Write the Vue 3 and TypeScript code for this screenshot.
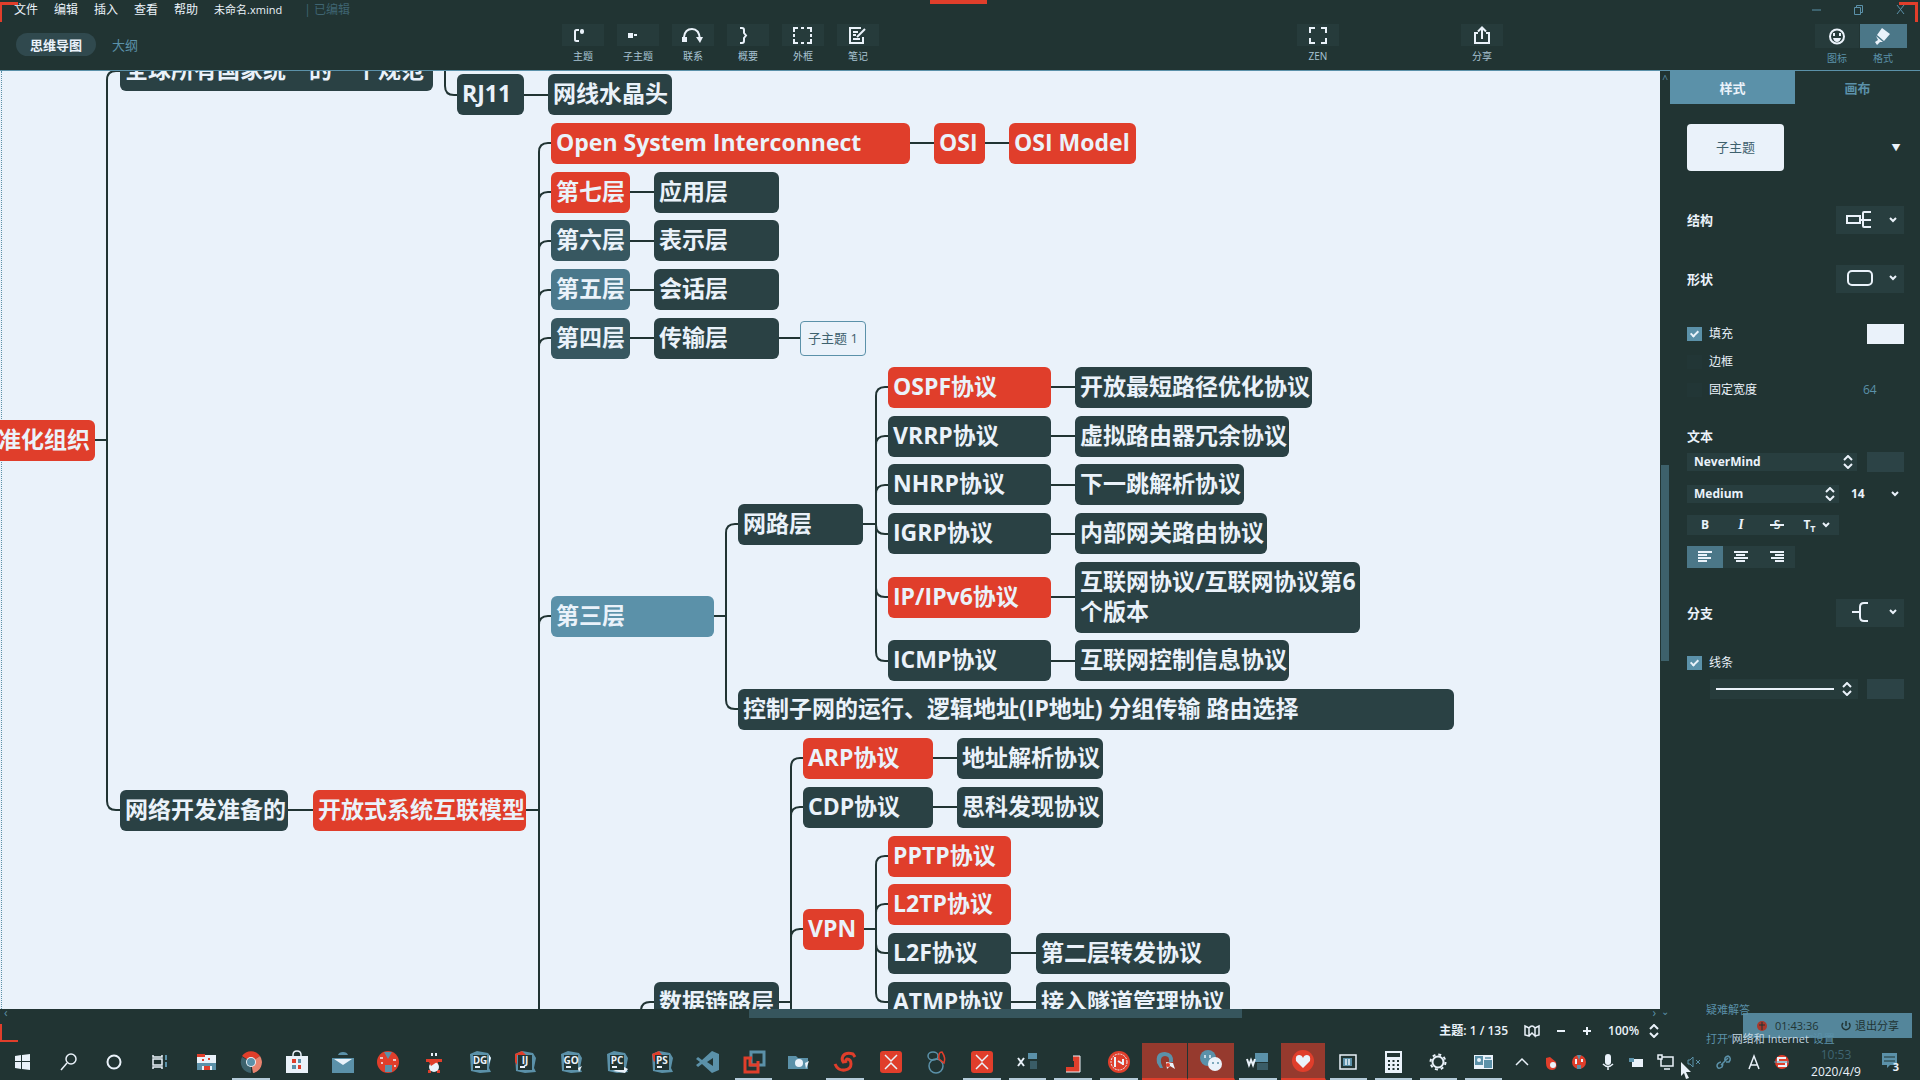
<script setup lang="ts">
import { ref } from 'vue'

type Tone = 'dark' | 'red' | 'slate' | 'steel' | 'blue' | 'plain'

interface Topic {
  text: string
  x: number
  y: number
  w: number
  h?: number
  tone?: Tone
}

interface Icon {
  name: string
  svg: string
}

interface TaskItem extends Icon {
  state?: 'open' | 'alert'
}

const menus = ['文件', '编辑', '插入', '查看', '帮助']

const tools: Icon[] = [
  { name: '主题', svg: '<path d="M7 5H4.500Q3 5 3 6.500V14.500Q3 16 4.500 16H7" fill="none" stroke="currentColor" stroke-width="2"/><rect x="8" y="4" width="4" height="5" rx="2" fill="currentColor"/>' },
  { name: '子主题', svg: '<rect x="1" y="8" width="5" height="5" fill="currentColor"/><rect x="7" y="9" width="3" height="2" fill="currentColor"/>' },
  { name: '联系', svg: '<rect x="0" y="12" width="5" height="5" fill="currentColor"/><path d="M2 12Q3 4 10 4Q17 4 18 14" fill="none" stroke="currentColor" stroke-width="2"/><path d="M14 12H21L18 18Z" fill="currentColor"/>' },
  { name: '概要', svg: '<path d="M3 3H5Q7 3 7 5V8L9 10.500L7 13V16Q7 18 5 18H3" fill="none" stroke="currentColor" stroke-width="2"/>' },
  { name: '外框', svg: '<path d="M2 7V3H6M9 3H12M15 3H19V7M19 9V12M19 14V18H15M12 18H9M6 18H2V14M2 12V9" fill="none" stroke="currentColor" stroke-width="2"/>' },
  { name: '笔记', svg: '<path d="M14 3H3V18H16V12" fill="none" stroke="currentColor" stroke-width="2"/><path d="M6 7H11M6 10H9M6 14H13M10 12L18 4" fill="none" stroke="currentColor" stroke-width="2"/>' }
]
const zen: Icon = { name: 'ZEN', svg: '<path d="M2 8V3H7M13 3H18V8M18 13V18H13M7 18H2V13" fill="none" stroke="currentColor" stroke-width="2"/>' }
const share: Icon = { name: '分享', svg: '<path d="M6 8H3V18H17V8H14M10 14V3M6 6.500L10 2.500L14 6.500" fill="none" stroke="currentColor" stroke-width="2"/>' }
const side: Icon[] = [
  { name: '图标', svg: '<circle cx="10" cy="10.500" r="7" fill="none" stroke="currentColor" stroke-width="2"/><path d="M6 7h2v3h-2zM12 7h2v3h-2zM6 12H14Q13 16 10 16Q7 16 6 12Z" fill="currentColor"/>' },
  { name: '格式', svg: '<path d="M9 2L17 8L11 15L4 9ZM3 10L10 16L7 16L4 19L2 16L5 14Z" fill="currentColor"/>' }
]

const topics: Topic[] = [
  { text: '全球所有国家统一的一个规范', x: 120, y: 50, w: 313 },
  { text: 'RJ11', x: 457, y: 74, w: 67 },
  { text: '网线水晶头', x: 548, y: 74, w: 124 },
  { text: 'Open System Interconnect', x: 551, y: 123, w: 359, tone: 'red' },
  { text: 'OSI', x: 934, y: 123, w: 51, tone: 'red' },
  { text: 'OSI Model', x: 1009, y: 123, w: 127, tone: 'red' },
  { text: '第七层', x: 551, y: 172, w: 79, tone: 'red' },
  { text: '应用层', x: 654, y: 172, w: 125 },
  { text: '第六层', x: 551, y: 220, w: 79, tone: 'slate' },
  { text: '表示层', x: 654, y: 220, w: 125 },
  { text: '第五层', x: 551, y: 269, w: 79, tone: 'steel' },
  { text: '会话层', x: 654, y: 269, w: 125 },
  { text: '第四层', x: 551, y: 318, w: 79, tone: 'slate' },
  { text: '传输层', x: 654, y: 318, w: 125 },
  { text: '子主题 1', x: 800, y: 321, w: 66, h: 35, tone: 'plain' },
  { text: 'OSPF协议', x: 888, y: 367, w: 163, tone: 'red' },
  { text: '开放最短路径优化协议', x: 1075, y: 367, w: 237 },
  { text: 'VRRP协议', x: 888, y: 416, w: 163 },
  { text: '虚拟路由器冗余协议', x: 1075, y: 416, w: 214 },
  { text: 'NHRP协议', x: 888, y: 464, w: 163 },
  { text: '下一跳解析协议', x: 1075, y: 464, w: 169 },
  { text: 'IGRP协议', x: 888, y: 513, w: 163 },
  { text: '内部网关路由协议', x: 1075, y: 513, w: 192 },
  { text: 'IP/IPv6协议', x: 888, y: 577, w: 163, tone: 'red' },
  { text: '互联网协议/互联网协议第6\n个版本', x: 1075, y: 562, w: 285, h: 71 },
  { text: 'ICMP协议', x: 888, y: 640, w: 163 },
  { text: '互联网控制信息协议', x: 1075, y: 640, w: 214 },
  { text: '网路层', x: 738, y: 504, w: 125 },
  { text: '第三层', x: 551, y: 596, w: 163, tone: 'blue' },
  { text: '控制子网的运行、逻辑地址(IP地址) 分组传输 路由选择', x: 738, y: 689, w: 716 },
  { text: 'ARP协议', x: 803, y: 738, w: 130, tone: 'red' },
  { text: '地址解析协议', x: 957, y: 738, w: 146 },
  { text: 'CDP协议', x: 803, y: 787, w: 130 },
  { text: '思科发现协议', x: 957, y: 787, w: 146 },
  { text: 'PPTP协议', x: 888, y: 836, w: 123, tone: 'red' },
  { text: 'L2TP协议', x: 888, y: 884, w: 123, tone: 'red' },
  { text: 'VPN', x: 803, y: 909, w: 61, tone: 'red' },
  { text: 'L2F协议', x: 888, y: 933, w: 123 },
  { text: '第二层转发协议', x: 1036, y: 933, w: 194 },
  { text: 'ATMP协议', x: 888, y: 982, w: 123 },
  { text: '接入隧道管理协议', x: 1036, y: 982, w: 194 },
  { text: '数据链路层', x: 654, y: 982, w: 125 },
  { text: '网络开发准备的', x: 120, y: 790, w: 168 },
  { text: '开放式系统互联模型', x: 313, y: 790, w: 213, tone: 'red' },
  { text: '国际标准化组织', x: -76, y: 420, w: 171, tone: 'red' }
]

// Straight links between neighbouring topics: [x1, x2, y]
const links: number[][] = [
  [524, 548, 95], [910, 934, 143], [985, 1009, 143], [630, 654, 192], [630, 654, 241],
  [630, 654, 290], [630, 654, 338], [779, 800, 338], [1051, 1075, 387], [1051, 1075, 436],
  [1051, 1075, 485], [1051, 1075, 534], [1051, 1075, 597], [1051, 1075, 661], [933, 957, 758],
  [933, 957, 807], [1011, 1036, 953], [1011, 1036, 1002], [288, 313, 810], [526, 539, 810],
  [95, 107, 440], [433, 445, 70], [714, 726, 616], [863, 876, 524], [864, 876, 929], [779, 791, 1002]
]

// Trunks fan out to their children; `up` children sit above the parent, `down` ones below it
const trunks = [
  { x: 107, from: 440, to: 120, up: [71], down: [810] },
  { x: 445, from: 60, to: 457, up: [], down: [95] },
  { x: 539, from: 1020, to: 551, up: [143, 192, 241, 290, 338, 616], down: [] },
  { x: 726, from: 616, to: 738, up: [524], down: [709] },
  { x: 876, from: 524, to: 888, up: [387, 436, 485], down: [534, 597, 661] },
  { x: 791, from: 1020, to: 803, up: [758, 807, 929], down: [] },
  { x: 876, from: 929, to: 888, up: [856, 904], down: [953, 1002] },
  { x: 641, from: 1020, to: 654, up: [1002], down: [] }
]

const linkPath = [
  ...links.map(([a, b, y]) => `M${a} ${y}H${b}`),
  ...trunks.flatMap((t) => [
    ...t.up.map((y) => `M${t.x} ${t.from}V${y + 9}Q${t.x} ${y} ${t.x + 9} ${y}H${t.to}`),
    ...t.down.map((y) => `M${t.x} ${t.from}V${y - 9}Q${t.x} ${y} ${t.x + 9} ${y}H${t.to}`)
  ])
].join('')

const scrollTop = 71
const place = (t: Topic) => ({
  left: `${t.x}px`,
  top: `${t.y - scrollTop}px`,
  width: `${t.w}px`,
  height: `${t.h ?? 41}px`
})

const fill = ref(true)
const border = ref(false)
const fixedWidth = ref(false)
const line = ref(true)

const L = '#eaf2fa'
const B = '#5b91a9'
const R = '#e03e2b'
const D = '#213433'
const jet = (label: string, accent: string) =>
  `<path d="M2 4L9 1L20 3L23 8L21 18L23 22L12 23L3 21Z" fill="${B}"/><path d="${accent}"/><rect x="5" y="5" width="14" height="15" fill="${D}"/><text x="12" y="14" font-size="10" font-weight="700" text-anchor="middle" fill="${L}">${label}</text><path d="M7 17H12" stroke="${L}" stroke-width="2"/>`
const xbox = `<rect x="1" y="1" width="22" height="22" rx="3" fill="${R}"/><path d="M6 5L12 11L18 5M6 19L12 13L18 19" fill="none" stroke="${L}" stroke-width="1.500"/>`

const tasks: TaskItem[] = [
  { name: '开始', svg: `<path d="M4 6L10 5V11H4ZM11 5L19 4V11H11ZM4 12H10V19L4 18ZM11 12H19V20L11 19Z" fill="${L}"/>` },
  { name: '搜索', svg: `<circle cx="14" cy="9" r="5" fill="none" stroke="${L}" stroke-width="1.500"/><path d="M10 13L4 20" stroke="${L}" stroke-width="1.500"/>` },
  { name: '助手', svg: `<circle cx="12" cy="12" r="6.500" fill="none" stroke="${L}" stroke-width="2"/>` },
  { name: '任务视图', svg: `<path d="M5 5V7H14V5M5 19V17H14V19M5 9V15H14V9Z" fill="none" stroke="${L}" stroke-width="1.500"/><path d="M18 5V19" stroke="${B}" stroke-width="2" stroke-dasharray="5 2"/>` },
  { name: '商城', svg: `<rect x="3" y="5" width="19" height="15" fill="${L}"/><path d="M3 4H11V7H3ZM8 9H10V11H8ZM14 8H16V10H14Z" fill="${R}"/><path d="M3 13H22V20H18V16H8V20H3Z" fill="${B}"/><rect x="10" y="16" width="6" height="4" fill="${R}"/>` },
  { name: '浏览器', state: 'open', svg: `<path d="M12 12L3 6A11 11 0 0 1 21 6Z" fill="${R}"/><path d="M12 12L21 6A11 11 0 0 1 14 23Z" fill="#e8836f"/><path d="M12 12L3 7A11 11 0 0 0 12 23Z" fill="#3d626c"/><circle cx="12" cy="12" r="5" fill="${L}"/><circle cx="12" cy="12" r="4" fill="${B}"/>` },
  { name: '应用商店', svg: `<path d="M8 7V5Q8 1 12 1Q16 1 16 5V7" fill="none" stroke="${L}" stroke-width="1.500"/><rect x="1" y="6" width="22" height="17" fill="${L}"/><path d="M7 9H11V13H7ZM13 15H16V19H13Z" fill="${R}"/><path d="M13 9H16V13H13ZM7 15H11V19H7Z" fill="${B}"/>` },
  { name: '邮件', svg: `<path d="M7 5Q8 2 12 2Q16 2 17 5ZM1 8H23V23H1Z" fill="${B}"/><path d="M3 9H21L12 15Z" fill="${L}"/>` },
  { name: '地球', svg: `<circle cx="12" cy="12" r="11" fill="${R}"/><path d="M8 2H16L12 9ZM9 15H16V22H9Z" fill="${B}"/><path d="M4 8H7M17 10H20M5 13H7M18 16H20" stroke="${L}" stroke-width="1.500"/>` },
  { name: '工具', svg: `<path d="M9 3H11V6H9ZM13 3H15V6H13Z" fill="${L}"/><path d="M4 9H20V12H16V14H8V12H4ZM6 20H9V23H6ZM15 20H18V23H15Z" fill="${R}"/><circle cx="12" cy="17" r="5" fill="${L}"/><path d="M7 12H15L9 16Z" fill="${R}"/>` },
  { name: 'DataGrip', svg: jet('DG', `M20 3L23 8L21 14V5Z" fill="${L}`) },
  { name: 'IntelliJ IDEA', svg: jet('IJ', `M2 4L9 1L13 5H4V15L2 12Z" fill="${R}`) },
  { name: 'GoLand', svg: jet('GO', `M19 18L23 16L20 22Z" fill="${L}`) },
  { name: 'PyCharm', svg: jet('PC', `M19 17L23 19L20 23L8 21Z" fill="${L}`) },
  { name: 'PhpStorm', svg: jet('PS', `M2 4L9 1L12 5L4 12Z" fill="${R}`) },
  { name: '代码编辑器', svg: `<path d="M16 1L23 4V20L16 23L6 14L2 17L0 15L4 12L0 9L2 7L6 10ZM17 8L11 12L17 16Z" fill="${B}" fill-rule="evenodd"/>` },
  { name: '虚拟机', state: 'open', svg: `<rect x="9" y="2" width="13" height="13" fill="none" stroke="${B}" stroke-width="3"/><path d="M10 8H3V22H16V16M8 8V15H16V11" fill="none" stroke="${R}" stroke-width="3"/>` },
  { name: '相机', svg: `<path d="M1 6H9L11 8H21V19H1Z" fill="${B}"/><circle cx="12" cy="13" r="4" fill="${L}"/><path d="M18 13L22 11L19 19Z" fill="${L}"/>` },
  { name: '旋风', state: 'open', svg: `<path d="M2 14Q5 21 12 20Q18 19 18 14Q18 9 14 9Q12 10 13 13M11 13Q8 10 10 6Q13 2 20 4L22 7" fill="none" stroke="${R}" stroke-width="3"/>` },
  { name: 'Xshell', svg: xbox },
  { name: '地图', svg: `<ellipse cx="9" cy="6" rx="5" ry="4" fill="none" stroke="${B}" stroke-width="1.500"/><circle cx="12" cy="16" r="7" fill="none" stroke="${B}" stroke-width="1.500"/><path d="M15 9Q14 2 18 2Q22 8 20 13Z" fill="none" stroke="${R}" stroke-width="1.500"/>` },
  { name: 'XMind', state: 'open', svg: xbox },
  { name: '表格', state: 'open', svg: `<rect x="12" y="3" width="9" height="6" fill="${B}"/><path d="M14 11H21V19H14Z" fill="#3a5c66"/><path d="M2 8L8 16M8 8L2 16" stroke="${L}" stroke-width="2"/>` },
  { name: '演示', state: 'open', svg: `<path d="M12 6H19V22H5V17H13V11H12Z" fill="${R}"/><path d="M12 6H19V22H5" fill="none" stroke="${L}" stroke-width="1"/>` },
  { name: '录屏', state: 'open', svg: `<ellipse cx="12" cy="12" rx="11" ry="11" fill="${R}"/><circle cx="12" cy="12" r="8" fill="none" stroke="${L}" stroke-width="1" stroke-dasharray="2 1"/><path d="M8 7V17M11 11L16 14M16 9V15" stroke="${L}" stroke-width="2"/>` },
  { name: '会议', state: 'alert', svg: `<path d="M7 19L4 14Q2 3 12 3Q21 4 20 13H16Q17 7 12 7Q7 7 8 14L10 19Z" fill="${B}"/><path d="M13 13L20 14L22 20L17 17L14 20Z" fill="${L}"/><circle cx="15" cy="16" r="2" fill="${R}"/>` },
  { name: '微信', state: 'alert', svg: `<circle cx="9" cy="9" r="8" fill="${B}"/><circle cx="16" cy="15" r="7" fill="${L}"/><path d="M6 6V9M11 6V9" stroke="${L}" stroke-width="1.500"/><path d="M13 14H15M18 14H20" stroke="${B}" stroke-width="1.500"/>` },
  { name: '文档', state: 'open', svg: `<rect x="9" y="3" width="13" height="9" fill="${B}"/><path d="M11 13H22V20H11Z" fill="#3a5c66"/><path d="M1 9L3 15L5 10L7 15L9 9" fill="none" stroke="${L}" stroke-width="2"/>` },
  { name: '健康', state: 'alert', svg: `<ellipse cx="12" cy="12" rx="11" ry="11" fill="${R}"/><path d="M12 19L5 12Q4 6 8 6Q11 6 12 9Q13 6 16 6Q20 6 19 12Z" fill="${L}"/>` },
  { name: '取景', state: 'open', svg: `<rect x="4" y="5" width="16" height="14" fill="none" stroke="${L}" stroke-width="1.500"/><rect x="7" y="8" width="9" height="8" fill="${B}"/><path d="M10 9V15M13 9V15" stroke="${L}" stroke-width="1.500"/>` },
  { name: '计算器', state: 'open', svg: `<rect x="4" y="1" width="17" height="22" fill="${L}"/><rect x="6" y="3" width="13" height="4" fill="${D}"/><path d="M8 10V20M12.500 10V20M17 10V20" stroke="${D}" stroke-width="2" stroke-dasharray="2 2"/>` },
  { name: '设置', state: 'open', svg: `<circle cx="12" cy="12" r="5.500" fill="none" stroke="${L}" stroke-width="2"/><circle cx="12" cy="12" r="7.500" fill="none" stroke="${L}" stroke-width="2" stroke-dasharray="3 2.900"/>` },
  { name: '名片', state: 'open', svg: `<rect x="3" y="5" width="19" height="14" fill="${L}"/><path d="M4 6H12V15H4ZM13 10H21V18H13Z" fill="${B}"/><circle cx="8" cy="10" r="2" fill="${L}"/><path d="M14 8H20" stroke="${B}" stroke-width="1.500"/>` }
]

const tray: Icon[] = [
  { name: '显示隐藏的图标', svg: `<path d="M7 15L13 9L19 15" fill="none" stroke="${L}" stroke-width="1.500"/>` },
  { name: '安全', svg: `<path d="M8 8L12 7L18 12Q20 20 14 20Q8 20 8 13Z" fill="${R}"/><circle cx="15" cy="15" r="3" fill="${L}"/>` },
  { name: '网络球', svg: `<circle cx="12" cy="12" r="7" fill="${R}"/><path d="M10 5H14L12 10ZM10 15H14V19H10Z" fill="${B}"/><path d="M9 9V14M15 9V12" stroke="${L}" stroke-width="2"/>` },
  { name: '麦克风', svg: `<rect x="9" y="4" width="6" height="11" rx="3" fill="${L}"/><path d="M7 14Q12 19 17 14M12 17V20" fill="none" stroke="${L}" stroke-width="1.500"/>` },
  { name: '电源', svg: `<rect x="7" y="9" width="11" height="8" fill="${L}"/><path d="M4 8H9V12H4Z" fill="${B}"/>` },
  { name: '网络', svg: `<rect x="7" y="7" width="12" height="9" fill="none" stroke="${L}" stroke-width="1.500"/><path d="M4 5H8V9H4ZM10 19H16" stroke="${L}" fill="${D}" stroke-width="1.500"/>` },
  { name: '音量', svg: `<path d="M5 10H7L10 7V17L7 14H5Z" fill="none" stroke="${B}"/><path d="M13 10L17 14M17 10L13 14" stroke="${B}"/>` },
  { name: '链接', svg: `<path d="M9 12Q5 13 5 16Q6 20 10 17L11 14M13 11Q12 7 16 6Q20 8 17 12L14 12M9 15L16 8" fill="none" stroke="${B}" stroke-width="1.500"/>` },
  { name: '输入法', svg: `<path d="M8 19L13 6L18 19M10 15H16" fill="none" stroke="${L}" stroke-width="1.500"/>` },
  { name: '拼音', svg: `<circle cx="12" cy="12" r="7" fill="${R}"/><path d="M16 8H8V12H16V16H8" fill="none" stroke="${L}" stroke-width="2"/><path d="M4 12H19" stroke="${B}" stroke-width="1"/>` }
]
</script>

<template>
  <div class="app">
    <header class="head">
      <nav class="menu">
        <button v-for="m in menus" :key="m">{{ m }}</button>
        <span class="file">未命名.xmind</span>
        <span class="edited">| 已编辑</span>
        <div class="win">
          <button aria-label="最小化"><svg width="12" height="12"><path d="M1 6H10" stroke="currentColor" /></svg></button>
          <button aria-label="还原"><svg width="12" height="12" fill="none" stroke="currentColor"><path d="M1.500 3.500H7.500V10.500H1.500ZM3.500 3V1.500H9.500V8.500H8" /></svg></button>
          <button aria-label="关闭"><svg width="12" height="12"><path d="M2 1L9 10M9 1L2 10" stroke="currentColor" /></svg></button>
        </div>
      </nav>
      <div class="bar">
        <div class="views">
          <button class="view on">思维导图</button>
          <button class="view">大纲</button>
        </div>
        <div class="tools">
          <button v-for="t in tools" :key="t.name" class="tool">
            <span class="pad"><svg width="21" height="21" viewBox="0 0 21 21" v-html="t.svg"></svg></span>{{ t.name }}
          </button>
        </div>
        <button class="tool zen">
          <span class="pad"><svg width="20" height="21" viewBox="0 0 20 21" v-html="zen.svg"></svg></span>{{ zen.name }}
        </button>
        <button class="tool share">
          <span class="pad"><svg width="20" height="21" viewBox="0 0 20 21" v-html="share.svg"></svg></span>{{ share.name }}
        </button>
        <div class="side">
          <button v-for="(t, i) in side" :key="t.name" class="tool dim" :class="{ active: i === 1 }">
            <span class="pad"><svg width="20" height="20" viewBox="0 0 20 20" v-html="t.svg"></svg></span>{{ t.name }}
          </button>
        </div>
      </div>
      <i class="mark tl"></i><i class="mark tr"></i><i class="notch"></i>
    </header>

    <div class="body">
      <div class="stage">
        <main class="canvas">
          <svg class="lines" width="1660" height="940" :viewBox="`0 ${scrollTop} 1660 940`">
            <path :d="linkPath" fill="none" stroke="#213433" stroke-width="2" />
          </svg>
          <div
            v-for="t in topics"
            :key="t.text"
            class="topic"
            :class="t.tone ?? 'dark'"
            :style="place(t)"
          >{{ t.text }}</div>
        </main>
        <div class="hscroll"><span>‹</span><i></i><span>›</span></div>
      </div>
      <div class="vscroll"><span>^</span><i></i><span>⌄</span></div>

      <aside class="panel">
        <div class="tabs">
          <button class="tab on">样式</button>
          <button class="tab">画布</button>
        </div>
        <div class="preview">
          <div class="card">子主题</div>
          <button class="drop" aria-label="更多样式">▼</button>
        </div>
        <div class="row struct">
          <strong>结构</strong>
          <button class="pick" aria-label="结构">
            <svg width="68" height="28" fill="none" stroke="#eaf2fa" stroke-width="2"><path d="M11 10H24V17H11ZM24 14H35M35 6H28Q27 6 27 7V20Q27 21 28 21H35" /><path d="M54 12L57 15L60 12" /></svg>
          </button>
        </div>
        <div class="row shape">
          <strong>形状</strong>
          <button class="pick" aria-label="形状">
            <svg width="68" height="28" fill="none" stroke="#eaf2fa" stroke-width="2"><rect x="12" y="6" width="24" height="14" rx="4" /><path d="M54 11L57 14L60 11" /></svg>
          </button>
        </div>
        <div class="checks">
          <div class="check"><label><input v-model="fill" type="checkbox" />填充</label><button class="swatch" aria-label="填充颜色"></button></div>
          <div class="check"><label><input v-model="border" type="checkbox" />边框</label></div>
          <div class="check"><label><input v-model="fixedWidth" type="checkbox" />固定宽度</label><span class="num">64</span></div>
        </div>
        <strong class="title">文本</strong>
        <div class="line family">
          <span class="sel">
            <select aria-label="字体"><option>NeverMind</option></select>
            <svg width="10" height="14"><path d="M1 5L5 1L9 5M1 9L5 13L9 9" /></svg>
          </span>
          <button class="blank" aria-label="文字颜色"></button>
        </div>
        <div class="line weight">
          <span class="sel short">
            <select aria-label="字重"><option>Medium</option></select>
            <svg width="10" height="14"><path d="M1 5L5 1L9 5M1 9L5 13L9 9" /></svg>
          </span>
          <span class="sel size">
            <select aria-label="字号"><option>14</option></select>
            <svg width="10" height="8"><path d="M2 2L5 5L8 2" /></svg>
          </span>
        </div>
        <div class="group text">
          <button><b>B</b></button>
          <button><i>I</i></button>
          <button class="strike">S</button>
          <button class="caps">T<small>T</small><svg width="10" height="8"><path d="M2 2L5 5L8 2" /></svg></button>
        </div>
        <div class="group align">
          <button class="on" aria-label="左对齐"><svg width="14" height="12"><path d="M0 1H14M0 4H9M0 7H13M0 10H9" /></svg></button>
          <button aria-label="居中"><svg width="14" height="12"><path d="M0 1H14M2 4H11M0 7H14M2 10H11" /></svg></button>
          <button aria-label="右对齐"><svg width="14" height="12"><path d="M0 1H14M5 4H14M1 7H14M5 10H14" /></svg></button>
        </div>
        <div class="row branch">
          <strong>分支</strong>
          <button class="pick" aria-label="分支">
            <svg width="68" height="28" fill="none" stroke="#eaf2fa" stroke-width="2"><path d="M16 13H24M32 4H28Q24 4 24 8V18Q24 22 28 22H32" /><path d="M54 11L57 14L60 11" /></svg>
          </button>
        </div>
        <div class="check stroke"><label><input v-model="line" type="checkbox" />线条</label></div>
        <div class="line weightline">
          <button class="rule" aria-label="线条粗细"><i></i><svg width="10" height="14"><path d="M1 5L5 1L9 5M1 9L5 13L9 9" /></svg></button>
          <button class="blank" aria-label="线条颜色"></button>
        </div>
      </aside>
    </div>

    <footer class="status">
      <i class="mark bl"></i>
      <span>主题: 1 / 135</span>
      <button aria-label="导航"><svg width="16" height="14" fill="none" stroke="#eaf2fa" stroke-width="1.500"><path d="M1 2L5 4V12L1 11ZM5 4Q8 0 11 4V12L8 9L5 12M11 4L15 2V11L11 12" /></svg></button>
      <button aria-label="缩小"><svg width="10" height="10"><path d="M1 5H9" stroke="#eaf2fa" stroke-width="2" /></svg></button>
      <button aria-label="放大"><svg width="10" height="10"><path d="M1 5H9M5 1V9" stroke="#eaf2fa" stroke-width="2" /></svg></button>
      <span class="zoom">100%</span>
      <svg width="10" height="14" fill="none" stroke="#eaf2fa" stroke-width="2"><path d="M1 5L5 1L9 5M1 9L5 13L9 9" /></svg>
    </footer>

    <div class="taskbar">
      <div class="tasks">
        <button v-for="t in tasks" :key="t.name" class="task" :class="t.state" :aria-label="t.name">
          <svg width="24" height="24" viewBox="0 0 24 24" v-html="t.svg"></svg>
        </button>
      </div>
      <div class="tray">
        <button v-for="t in tray" :key="t.name" :aria-label="t.name"><svg width="24" height="24" viewBox="0 0 24 24" v-html="t.svg"></svg></button>
        <div class="clock"><time class="faint">10:53</time><time>2020/4/9</time></div>
        <button class="note" aria-label="通知">
          <svg width="24" height="24" viewBox="0 0 24 24"><path d="M3 3H18V15H11L8 18V15H3Z" fill="#5b91a9" /><path d="M5 7H16M5 11H16" stroke="#213433" /><text x="17" y="21" font-size="11" font-weight="700" text-anchor="middle" fill="#eaf2fa">3</text></svg>
        </button>
      </div>
    </div>

    <div class="meeting">
      <svg width="12" height="12"><circle cx="6" cy="6" r="5" fill="#a8392c" /><path d="M3 5H9M6 2V10" stroke="#213433" /></svg>
      <span>01:43:36</span>
      <button><svg width="12" height="12" fill="none" stroke="currentColor" stroke-width="1.500"><path d="M3 3A4 4 0 1 0 9 3M6 1V6" /></svg>退出分享</button>
    </div>
    <div class="tips">
      <span>疑难解答</span>
      <span>打开“<em>网络和 Internet</em>”设置</span>
    </div>
    <svg class="cursor" width="12" height="18"><path d="M1 0L11 10H6L9 16L6 17L4 11L1 14Z" fill="#eaf2fa" /></svg>
  </div>
</template>

<style>
body {
  background: #213433;
}
</style>

<style scoped>
.app {
  position: relative;
  display: flex;
  flex-direction: column;
  height: 100vh;
  overflow: hidden;
  background: #213433;
  color: #eaf2fa;
  font-family: "Open Sans", "Noto Sans CJK SC", sans-serif;
  font-size: 12px;
  line-height: 16px;
}
button {
  display: flex;
  align-items: center;
  justify-content: center;
  padding: 0;
  border: 0;
  background: none;
  color: inherit;
  font: inherit;
  white-space: nowrap;
}
svg {
  display: block;
  flex: none;
}
.head {
  position: relative;
  height: 70px;
  border-bottom: 1px solid #5b91a9;
}
.menu {
  display: flex;
  align-items: center;
  gap: 16px;
  height: 20px;
  padding-left: 14px;
}
.file {
  font-size: 11px;
}
.edited {
  margin-left: 6px;
  color: #3f6572;
}
.win {
  display: flex;
  gap: 30px;
  margin-left: auto;
  padding-right: 13px;
  color: #5b91a9;
}
.bar {
  display: flex;
  align-items: flex-start;
  padding-top: 4px;
}
.views {
  display: flex;
  gap: 16px;
  width: 546px;
  padding: 9px 0 0 16px;
}
.view {
  height: 23px;
  border-radius: 12px;
  color: #5b91a9;
  font-size: 13px;
}
.view.on {
  width: 80px;
  background: #30494e;
  color: #eaf2fa;
  font-weight: 600;
}
.tools {
  display: flex;
  gap: 13px;
}
.tool {
  flex-direction: column;
  width: 42px;
  color: #a9c4d3;
  font-size: 10px;
  line-height: 20px;
}
.pad {
  display: flex;
  align-items: center;
  justify-content: center;
  width: 42px;
  height: 22px;
  background: #263b3b;
  color: #eaf2fa;
}
.tools .pad {
  justify-content: flex-start;
  padding-left: 10px;
  width: 32px;
}
.zen {
  margin-left: auto;
}
.share {
  margin-left: 122px;
}
.side {
  display: flex;
  gap: 2px;
  margin: 0 15px 0 312px;
}
.dim {
  width: 44px;
  color: #5b91a9;
}
.dim .pad {
  width: 44px;
  height: 24px;
}
.active .pad {
  width: 47px;
  background: #4b7788;
}
.mark {
  position: absolute;
  width: 16px;
  height: 17px;
  border: 0 solid #e03e2b;
}
.tl {
  top: 2px;
  left: 0;
  border-width: 3px 0 0 2px;
}
.tr {
  top: 2px;
  right: 2px;
  border-width: 3px 3px 0 0;
}
.bl {
  bottom: 1px;
  left: 0;
  height: 16px;
  border-width: 0 0 2px 2px;
}
.notch {
  position: absolute;
  top: 0;
  left: 930px;
  width: 57px;
  height: 4px;
  background: #e03e2b;
}
.body {
  display: flex;
  flex: 1;
  min-height: 0;
}
.stage {
  display: flex;
  flex: 1;
  flex-direction: column;
  min-width: 0;
}
.canvas {
  position: relative;
  flex: 1;
  overflow: hidden;
  background: #eaf2fa;
}
.canvas::before {
  content: "";
  position: absolute;
  inset: 0 auto 0 1px;
  border-left: 1px dotted #5b91a9;
}
.lines {
  position: absolute;
  top: 0;
  left: 0;
}
.topic {
  position: absolute;
  box-sizing: border-box;
  padding: 4px 5px;
  border-radius: 6px;
  font-size: 23px;
  font-weight: 700;
  line-height: 30px;
  white-space: pre;
}
.dark {
  background: #2a4144;
}
.red {
  background: #e03e2b;
}
.slate {
  background: #375760;
}
.steel {
  background: #4b788b;
}
.blue {
  background: #5b91a9;
}
.plain {
  padding: 0;
  border: 1px solid #5b91a9;
  border-radius: 4px;
  color: #3e616d;
  font-size: 13px;
  font-weight: 400;
  line-height: 32px;
  text-align: center;
}
.hscroll {
  position: relative;
  display: flex;
  justify-content: space-between;
  height: 10px;
  padding: 0 4px;
  color: #5b91a9;
  line-height: 8px;
}
.hscroll i {
  position: absolute;
  left: 749px;
  width: 493px;
  height: 9px;
  background: #36555d;
}
.vscroll {
  position: relative;
  display: flex;
  flex-direction: column;
  justify-content: space-between;
  align-items: center;
  width: 10px;
  color: #5b91a9;
  font-size: 10px;
}
.vscroll i {
  position: absolute;
  top: 394px;
  width: 8px;
  height: 196px;
  background: #3d616b;
}
.panel {
  width: 250px;
}
.tabs {
  display: flex;
  height: 33px;
}
.tab {
  flex: 1;
  color: #5b91a9;
  font-size: 13px;
  font-weight: 700;
}
.tab.on {
  background: #5b91a9;
  color: #eaf2fa;
}
.preview,
.row,
.check,
.line {
  display: flex;
  align-items: center;
  justify-content: space-between;
  padding: 0 16px 0 17px;
}
.preview {
  padding-top: 20px;
}
.card {
  width: 97px;
  border-radius: 4px;
  background: #eaf2fa;
  color: #3e616d;
  font-size: 13px;
  line-height: 47px;
  text-align: center;
}
.drop {
  width: 16px;
  font-size: 9px;
}
.row {
  height: 28px;
}
.row strong,
.title {
  font-size: 13px;
}
.struct {
  margin-top: 35px;
}
.shape {
  margin-top: 31px;
}
.pick {
  background: #283e3f;
}
.checks {
  margin-top: 27px;
}
.check {
  height: 28px;
}
.check label {
  display: flex;
  align-items: center;
  gap: 7px;
}
.check input {
  position: relative;
  width: 15px;
  height: 14px;
  margin: 0;
  appearance: none;
  background: #223636;
}
.check input:checked {
  background: #5b91a9;
}
.check input:checked::after {
  content: "";
  position: absolute;
  top: 2px;
  left: 5px;
  width: 3px;
  height: 6px;
  border: solid #eaf2fa;
  border-width: 0 2px 2px 0;
  transform: rotate(45deg);
}
.swatch {
  width: 37px;
  height: 20px;
  background: #eaf2fa;
}
.num {
  width: 41px;
  color: #5b91a9;
}
.title {
  display: block;
  margin: 24px 0 0 17px;
}
.line {
  height: 20px;
}
.family {
  margin-top: 8px;
}
.sel {
  position: relative;
  display: flex;
  align-items: center;
  width: 170px;
  height: 18px;
  background: #283e3f;
}
.sel svg {
  position: absolute;
  right: 4px;
}
.short {
  width: 152px;
}
.size {
  width: 60px;
  background: none;
}
.sel select {
  width: 100%;
  padding: 0 0 0 7px;
  border: 0;
  appearance: none;
  background: none;
  color: inherit;
  font: inherit;
  font-weight: 700;
}
.blank {
  width: 37px;
  height: 20px;
  background: #2c4346;
}
.weight {
  margin-top: 12px;
}
.group {
  display: flex;
  width: 152px;
  height: 20px;
  margin: 11px 0 0 17px;
  background: #283e3f;
}
.group button {
  width: 36px;
}
.group .caps {
  width: 44px;
  font-weight: 700;
}
.caps small {
  margin-right: 5px;
  font-size: 9px;
  line-height: 12px;
  align-self: flex-end;
}
.text i {
  font-family: "Liberation Serif", serif;
  font-weight: 700;
  font-size: 14px;
}
.strike {
  position: relative;
  font-weight: 600;
}
.strike::after {
  content: "";
  position: absolute;
  width: 14px;
  height: 2px;
  background: #eaf2fa;
}
.group.align {
  width: 108px;
  height: 22px;
}
.align .on {
  background: #4b7788;
}
.sel svg,
.group svg,
.rule svg {
  fill: none;
  stroke: #eaf2fa;
  stroke-width: 2px;
}
.branch {
  margin-top: 31px;
}
.stroke {
  margin-top: 22px;
}
.weightline {
  margin-top: 2px;
}
.weightline .rule {
  gap: 8px;
  width: 148px;
  height: 20px;
  margin-left: 23px;
  background: #263b3b;
}
.rule i {
  width: 118px;
  height: 2px;
  background: #eaf2fa;
}
.status {
  position: relative;
  display: flex;
  align-items: center;
  height: 24px;
  padding-right: 261px;
  justify-content: flex-end;
  gap: 16px;
  font-weight: 600;
}
.status .zoom {
  margin-right: -6px;
}
.taskbar {
  display: flex;
  height: 37px;
}
.tasks {
  display: flex;
  flex: 1;
}
.task {
  flex: 1;
  box-sizing: border-box;
  position: relative;
}
.task:nth-child(n + 29) {
  flex: 0 0 45px;
}
.open::after {
  content: "";
  position: absolute;
  inset: auto 4px 0;
  height: 2px;
  background: #b4cbd9;
}
.alert {
  background: #963a2e;
  border-bottom: 2px solid #e03e2b;
  border-right: 1px solid #213433;
}
.tray {
  display: flex;
  width: 414px;
}
.tray button {
  width: 29px;
}
.clock {
  display: flex;
  flex-direction: column;
  align-items: center;
  justify-content: flex-end;
  width: 80px;
  line-height: 16px;
  gap: 1px;
}
.clock .faint {
  color: #3f6572;
}
.tips {
  position: absolute;
  right: 0;
  bottom: 34px;
  display: flex;
  flex-direction: column;
  gap: 15px;
  width: 214px;
  color: #5b91a9;
  font-size: 11px;
  line-height: 14px;
}
.tips em {
  color: #c3d7e3;
  font-style: normal;
}
.meeting {
  position: absolute;
  right: 8px;
  bottom: 42px;
  display: flex;
  align-items: center;
  box-sizing: border-box;
  width: 169px;
  height: 25px;
  padding: 0 13px;
  background: #54869b;
  color: #213433;
  font-size: 11px;
}
.meeting span {
  margin: 0 auto 0 7px;
}
.meeting button {
  gap: 3px;
}
.cursor {
  position: absolute;
  right: 228px;
  bottom: 0;
}
</style>
